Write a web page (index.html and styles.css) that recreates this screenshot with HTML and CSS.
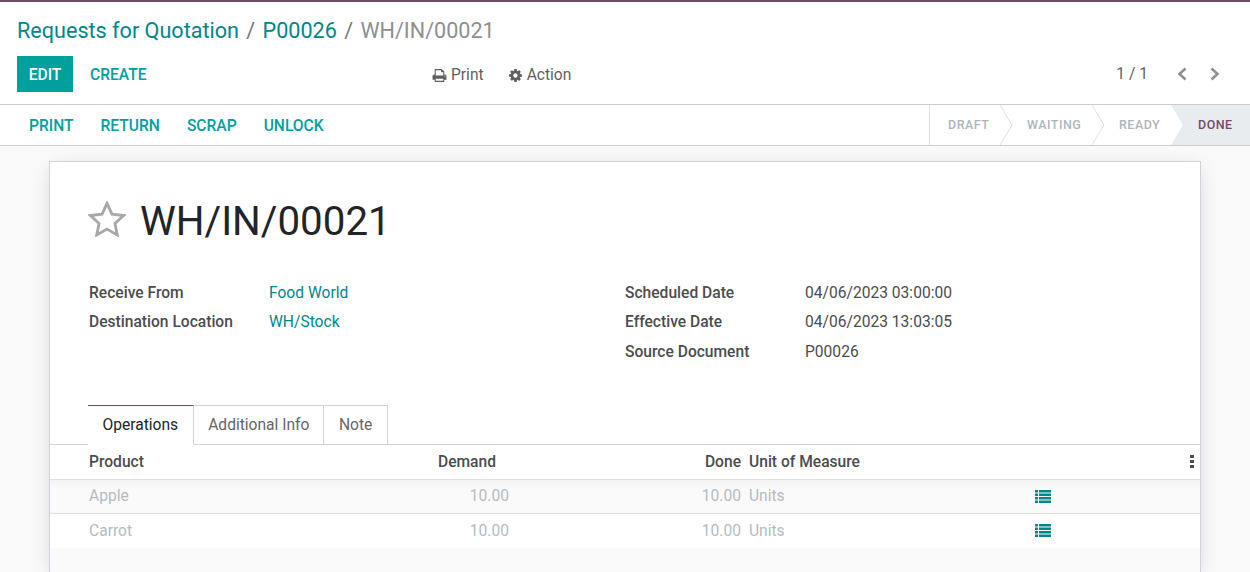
FILE: index.html
```html
<!DOCTYPE html>
<html lang="en">
<head>
  <meta charset="UTF-8" />
  <title>WH/IN/00021</title>
  <link rel="stylesheet" href="styles.css">
</head>
<body>

<div class="control-panel">
  <ol class="breadcrumb">
    <li><a>Requests for Quotation</a></li>
    <li class="sep">/</li>
    <li><a>P00026</a></li>
    <li class="sep">/</li>
    <li class="current">WH/IN/00021</li>
  </ol>
  <div class="cp-row">
    <div class="cp-buttons">
      <button class="btn-primary">EDIT</button>
      <button class="btn-link">CREATE</button>
    </div>
    <div class="cp-menus">
      <span class="menu">
        <svg class="icon-print" viewBox="0 0 1792 1792"><path d="M448 1536h896v-256h-896v256zm0-640h896v-384h-160q-40 0-68-28t-28-68v-160h-640v640zm1152 64q0-26-19-45t-45-19-45 19-19 45 19 45 45 19 45-19 19-45zm128 0v416q0 13-9.5 22.5t-22.5 9.5h-224v160q0 40-28 68t-68 28h-960q-40 0-68-28t-28-68v-160h-224q-13 0-22.5-9.5t-9.5-22.5v-416q0-79 56.5-135.500t135.500-56.500h64v-544q0-40 28-68t68-28h672q40 0 88 20t76 48l152 152q28 28 48 76t20 88v256h64q79 0 135.500 56.500t56.500 135.500z"/></svg>
        Print
      </span>
      <span class="menu">
        <svg class="icon-cog" viewBox="0 0 1792 1792"><path d="M1152 896q0-106-75-181t-181-75-181 75-75 181 75 181 181 75 181-75 75-181zm512-109v222q0 12-8 23t-20 13l-185 28q-19 54-39 91 35 50 107 138 10 12 10 25t-9 23q-27 37-99 108t-94 71q-12 0-26-9l-138-108q-44 23-91 38-16 136-29 186-7 28-36 28h-222q-14 0-24.500-8.500t-11.500-21.500l-28-184q-49-16-90-37l-141 107q-10 9-25 9-14 0-25-11-126-114-165-168-7-10-7-23 0-12 8-23 15-21 51-66.500t54-70.500q-27-50-41-99l-183-27q-13-2-21-12.500t-8-23.500v-222q0-12 8-23t19-13l186-28q14-46 39-92-40-57-107-138-10-12-10-24 0-10 9-23 26-36 98.500-107.500t94.500-71.500q13 0 26 10l138 107q44-23 91-38 16-136 29-186 7-28 36-28h222q14 0 24.500 8.500t11.500 21.500l28 184q49 16 90 37l142-107q9-9 24-9 13 0 25 10 129 119 165 170 7 8 7 22 0 12-8 23-15 21-51 66.500t-54 70.500q26 50 41 98l183 28q13 2 21 12.500t8 23.500z"/></svg>
        Action
      </span>
    </div>
    <div class="pager">
      <span class="pager-value">1 / 1</span>
      <svg class="pager-arrow" viewBox="0 0 10 14"><polyline points="8.500,1.500 2.500,7 8.500,12.500"/></svg>
      <svg class="pager-arrow" viewBox="0 0 10 14"><polyline points="1.500,1.500 7.500,7 1.500,12.500"/></svg>
    </div>
  </div>
</div>

<div class="statusbar">
  <div class="status-buttons">
    <button class="btn-link">PRINT</button>
    <button class="btn-link">RETURN</button>
    <button class="btn-link">SCRAP</button>
    <button class="btn-link">UNLOCK</button>
  </div>
  <div class="status-steps">
    <div class="step step-draft">DRAFT<svg class="step-arrow" viewBox="0 0 13 40"><polyline points="0,0 12,20 0,40"/></svg></div>
    <div class="step step-waiting">WAITING<svg class="step-arrow" viewBox="0 0 13 40"><polyline points="0,0 12,20 0,40"/></svg></div>
    <div class="step step-ready">READY</div>
    <div class="step step-done">DONE</div>
  </div>
</div>

<div class="content">
  <div class="sheet">
    <div class="title-row">
      <svg class="star" viewBox="0 0 40 38"><polygon points="20,2.500 25.200,13.900 37.500,15.300 28.400,23.700 30.800,35.800 20,29.700 9.200,35.800 11.600,23.700 2.500,15.300 14.800,13.900"/></svg>
      <h1>WH/IN/00021</h1>
    </div>

    <div class="form-groups">
      <div class="form-group">
        <div class="field"><label>Receive From</label><a>Food World</a></div>
        <div class="field"><label>Destination Location</label><a>WH/Stock</a></div>
      </div>
      <div class="form-group">
        <div class="field"><label>Scheduled Date</label><span>04/06/2023 03:00:00</span></div>
        <div class="field"><label>Effective Date</label><span>04/06/2023 13:03:05</span></div>
        <div class="field"><label>Source Document</label><span>P00026</span></div>
      </div>
    </div>

    <div class="tabs">
      <div class="tab active">Operations</div>
      <div class="tab">Additional Info</div>
      <div class="tab">Note</div>
    </div>

    <table class="lines">
      <thead>
        <tr>
          <th class="col-product">Product</th>
          <th class="col-demand num">Demand</th>
          <th class="col-done num">Done</th>
          <th class="col-uom">Unit of Measure</th>
          <th class="col-icon"></th>
          <th class="col-menu"><span class="kebab"><i></i><i></i><i></i></span></th>
        </tr>
      </thead>
      <tbody>
        <tr>
          <td class="col-product">Apple</td>
          <td class="col-demand num">10.00</td>
          <td class="col-done num">10.00</td>
          <td class="col-uom">Units</td>
          <td class="col-icon"><svg class="icon-list" viewBox="0 0 16 13"><path d="M0 0h3v2.500H0zM4 0h12v2.500H4zM0 3.500h3V6H0zM4 3.500h12V6H4zM0 7h3v2.500H0zM4 7h12v2.500H4zM0 10.500h3V13H0zM4 10.500h12V13H4z"/></svg></td>
          <td class="col-menu"></td>
        </tr>
        <tr>
          <td class="col-product">Carrot</td>
          <td class="col-demand num">10.00</td>
          <td class="col-done num">10.00</td>
          <td class="col-uom">Units</td>
          <td class="col-icon"><svg class="icon-list" viewBox="0 0 16 13"><path d="M0 0h3v2.500H0zM4 0h12v2.500H4zM0 3.500h3V6H0zM4 3.500h12V6H4zM0 7h3v2.500H0zM4 7h12v2.500H4zM0 10.500h3V13H0zM4 10.500h12V13H4z"/></svg></td>
          <td class="col-menu"></td>
        </tr>
      </tbody>
    </table>
    <div class="lines-footer"></div>
  </div>
</div>

</body>
</html>
```

FILE: styles.css
```css
* { box-sizing: border-box; }
html, body { height: 100%; }
body { margin: 0; overflow: hidden; display: flex; flex-direction: column; background: #f9f9f9; color: #4c4c4c; font-family: Roboto, "Noto Sans", sans-serif; font-size: 15.6px; line-height: 20px; }
a { color: #00868b; }
button { border: 0; background: none; font: inherit; cursor: pointer; }

.control-panel { height: 105px; flex: none; padding: 0 17px; background: #fff; border-top: 2px solid #714b67; border-bottom: 1px solid #ccc; }
.breadcrumb { display: flex; gap: 7.3px; margin: 0; padding: 15px 0 0; list-style: none; font-size: 21.6px; line-height: 28px; }
.breadcrumb .sep { color: #777; }
.breadcrumb .current { color: #8f8f8f; }

.cp-row { position: relative; display: flex; align-items: center; justify-content: space-between; height: 36px; margin-top: 11px; }
.cp-buttons { display: flex; align-items: center; }
.cp-buttons .btn-primary { height: 36px; padding: 1px 11.7px 0; background: #00a09d; color: #fff; font-weight: 500; font-size: 15.6px; }
.cp-buttons .btn-link { margin-left: 5px; }
.btn-link { padding: 1px 12px 0; color: #00a09d; font-weight: 500; font-size: 15.6px; }

.cp-menus { position: absolute; left: 415px; top: 9px; display: flex; gap: 24px; font-size: 15.6px; color: #5f5f5f; }
.menu { display: flex; align-items: center; gap: 4px; }
.icon-print, .icon-cog { width: 15px; height: 15px; fill: #5f5f5f; }

.pager { display: flex; align-items: center; margin-right: 13px; }
.pager-value { margin-right: 29px; font-size: 15.6px; color: #5f5f5f; }
.pager-arrow { width: 10px; height: 14px; fill: none; stroke: #8a8f93; stroke-width: 2.500; }
.pager-arrow + .pager-arrow { margin-left: 23px; }

.statusbar { height: 41px; flex: none; display: flex; justify-content: space-between; padding-left: 17px; background: #fff; border-bottom: 1px solid #ccc; }
.status-buttons { display: flex; align-items: center; gap: 3px; }
.status-steps { display: flex; border-left: 1px solid #dee2e6; }
.step { position: relative; display: flex; align-items: center; height: 40px; font-size: 12.48px; font-weight: 500; letter-spacing: 0.04em; color: #adb5bd; }
.step-draft { width: 70px; padding-left: 18px; }
.step-waiting { width: 92px; padding-left: 27px; }
.step-ready { width: 79px; padding-left: 27px; }
.step-arrow { position: absolute; left: 100%; top: 0; width: 13px; height: 40px; fill: none; stroke: #dee2e6; }
.step-done { width: 79px; padding-left: 27px; color: #714b67; background: #e9ecef; clip-path: polygon(0 0, 100% 0, 100% 100%, 0 100%, 12px 50%); }

.content { flex: 1; min-height: 0; padding: 15px 49px 0; overflow: hidden; }
.sheet { height: 100%; background: #fff; border: 1px solid #ced4da; border-bottom: 0; box-shadow: 0 5px 20px -5px rgba(0, 0, 0, 0.2); }

.title-row { display: flex; align-items: center; padding: 28px 38px 0; height: 92px; }
.star { width: 38px; height: 36px; margin-right: 14px; margin-bottom: 7px; fill: none; stroke: #a8a8a8; stroke-width: 3; }
h1 { margin: 0; font-size: 40.3px; line-height: 50px; font-weight: 400; color: #212529; }

.form-groups { display: flex; padding: 24px 39px 0; height: 151px; }
.form-group { width: 536px; }
.field { display: flex; height: 29.500px; align-items: center; }
.field label { width: 180px; font-weight: 500; color: #4c4c4c; }
.field span { color: #4c4c4c; }

.tabs { display: flex; padding-left: 38px; height: 40px; border-bottom: 1px solid #ced4da; }
.tab { height: 40px; padding: 9px 14px 0 14.5px; color: #666; border: 1px solid #ced4da; border-left: 0; }
.tab:last-child { padding: 9px 15px 0 14.5px; }
.tab.active { padding: 9px 14.5px 0; color: #212529; background: #fff; border-top-color: #714b67; border-bottom-color: #fff; }

.lines { width: 100%; border-collapse: collapse; table-layout: fixed; }
.lines th { height: 34px; padding: 0; text-align: left; font-weight: 500; color: #4c4c4c; border-bottom: 1px solid #dee2e6; }
.lines td { height: 34px; padding: 0; color: #b5bbc1; border-bottom: 1px solid #dee2e6; }
.lines tbody tr:first-child td { background: linear-gradient(#f3f3f3, #fafafa 10px); }
.lines tbody tr:last-child td { height: 35px; border-bottom: 0; }
.lines .col-product { width: 260px; padding-left: 39px; }
.lines .col-demand { width: 199px; }
.lines .col-done { width: 232px; }
.lines .col-uom { width: 294px; padding-left: 8px; }
.lines .col-icon { width: 100px; }
.num { text-align: right; }
.lines th.col-demand { padding-right: 13px; text-align: right; }
.lines th.col-done { text-align: right; }
.kebab { float: right; display: flex; flex-direction: column; gap: 2px; margin-right: 6px; }
.kebab i { width: 4px; height: 3px; background: #4c4c4c; }
.icon-list { display: block; width: 16px; height: 13px; fill: #00868b; }
.lines-footer { height: 100%; background: #fafafa; }
```
